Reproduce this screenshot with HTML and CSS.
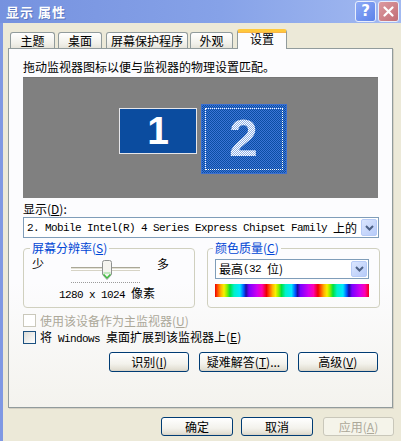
FILE: index.html
```html
<!DOCTYPE html>
<html lang="zh-CN">
<head>
<meta charset="utf-8">
<title>显示 属性</title>
<link rel="stylesheet" href="styles.css">
</head>
<body>
<div class="win">
  <div class="titlebar">
    <span class="title">显示 属性</span>
    <div class="tbtns">
      <span class="tb help">?</span>
      <span class="tb close"><svg width="11" height="11" viewBox="0 0 11 11"><path d="M1.5 1.5 L9.5 9.5 M9.5 1.5 L1.5 9.5" stroke="#fff" stroke-width="2.2" stroke-linecap="round"/></svg></span>
    </div>
  </div>
  <div class="frame">
    <div class="tabs">
      <div class="tab t1">主题</div>
      <div class="tab t2">桌面</div>
      <div class="tab t3">屏幕保护程序</div>
      <div class="tab t4">外观</div>
      <div class="tab sel">设置</div>
    </div>
    <div class="panel">
      <p class="hint">拖动监视器图标以便与监视器的物理设置匹配。</p>
      <div class="canvas">
        <div class="mon m1">1</div>
        <div class="mon m2"><div class="focus"><span class="num2">2</span></div></div>
      </div>
      <div class="lbl">显示(<u>D</u>):</div>
      <div class="combo wide">
        <span class="val"><span class="en">2. Mobile Intel(R) 4 Series Express Chipset Family </span>上的</span>
        <span class="drop"><svg width="9" height="6" viewBox="0 0 9 6"><path d="M1 1 L4.5 4.5 L8 1" stroke="#4d6185" stroke-width="2" fill="none"/></svg></span>
      </div>
      <div class="groups">
        <fieldset class="grp res">
          <legend>屏幕分辨率(<u>S</u>)</legend>
          <div class="srow">
            <span class="lo">少</span>
            <div class="slider">
              <div class="track"></div>
              <div class="ticks"></div>
              <svg class="thumb" width="12" height="21" viewBox="0 0 12 21">
                <path d="M1.5 2.5 Q1.5 0.5 3.5 0.5 H8.5 Q10.5 0.5 10.5 2.5 V14.5 L6 19.5 L1.5 14.5 Z" fill="#f5f4ef" stroke="#8e9190"/>
                <path d="M2.5 14.2 L6 18 L9.5 14.2" fill="none" stroke="#3fbf3f" stroke-width="1.3"/>
                <path d="M2.5 13 H9.5" stroke="#8fdc8f"/>
              </svg>
            </div>
            <span class="hi">多</span>
          </div>
          <div class="cap"><span class="en">1280 x 1024 </span>像素</div>
        </fieldset>
        <fieldset class="grp col">
          <legend>颜色质量(<u>C</u>)</legend>
          <div class="combo small">
            <span class="val">最高<span class="en">(32 </span>位)</span>
            <span class="drop"><svg width="9" height="6" viewBox="0 0 9 6"><path d="M1 1 L4.5 4.5 L8 1" stroke="#4d6185" stroke-width="2" fill="none"/></svg></span>
          </div>
          <div class="colorbar"></div>
        </fieldset>
      </div>
      <div class="chk dis"><span class="box"></span><span>使用该设备作为主监视器(<u>U</u>)</span></div>
      <div class="chk"><span class="box"></span><span>将<span class="en"> Windows </span>桌面扩展到该监视器上(<u>E</u>)</span></div>
      <div class="btnrow">
        <button class="btn w82">识别(<u>I</u>)</button>
        <button class="btn w90">疑难解答(<u>T</u>)...</button>
        <button class="btn w82">高级(<u>V</u>)</button>
      </div>
    </div>
    <div class="footer">
      <button class="btn ok">确定</button>
      <button class="btn cancel">取消</button>
      <button class="btn apply" disabled>应用(<u>A</u>)</button>
    </div>
  </div>
</div>
</body>
</html>
```

FILE: styles.css
```css
* { box-sizing: border-box; margin: 0; padding: 0; }
html, body { width: 401px; height: 441px; overflow: hidden; }
body {
  background: #ece9d8;
  font: 12px/14px "Noto Sans CJK SC", sans-serif;
  color: #000;
}
.en { font-family: "Liberation Mono", monospace; font-size: 11px; letter-spacing: -0.6px; white-space: pre; }
u { text-decoration: underline; text-underline-offset: 1px; }

.win { display: flex; flex-direction: column; height: 441px; }

.titlebar {
  height: 23px;
  display: flex;
  align-items: center;
  justify-content: space-between;
  padding: 0 2px 0 6px;
  background: linear-gradient(90deg, #7692df 0%, #86a2e8 55%, #a3baf1 100%);
}
.title {
  color: #fff;
  font-weight: bold;
  font-size: 13px;
  letter-spacing: 1px;
  text-shadow: 1px 1px 0 #5d77c0;
}
.tbtns { display: flex; gap: 2px; }
.tb {
  width: 21px; height: 21px;
  border: 1px solid #e8eefc;
  border-radius: 3px;
  display: flex; align-items: center; justify-content: center;
}
.help {
  background: linear-gradient(135deg, #8eabf6, #5c82ea);
  color: #fff;
  font: bold 15px/1 "DejaVu Sans", sans-serif;
}
.close { background: linear-gradient(135deg, #dc9aa0, #c26d75); }

.frame {
  flex: 1;
  display: flex;
  flex-direction: column;
  border-left: 3px solid #7f98e3;
  padding: 6px 8px 0 5px;
}

.tabs {
  display: flex;
  align-items: flex-end;
  height: 20px;
  padding-left: 2px;
  margin-bottom: -1px;
  position: relative;
  z-index: 1;
}
.tab {
  height: 16px;
  margin-bottom: 1px;
  border: 1px solid #919b9c;
  border-bottom: none;
  border-radius: 3px 3px 0 0;
  background: linear-gradient(#ffffff, #f1f0ea 70%, #e6e4da);
  text-align: center;
  padding-top: 1px;
  line-height: 14px;
}
.t1 { width: 45px; margin-right: 3px; }
.t2 { width: 44px; margin-right: 4px; }
.t3 { width: 82px; margin-right: 2px; }
.t4 { width: 43px; margin-right: 4px; }
.sel {
  width: 50px;
  height: 20px;
  margin-bottom: 0;
  border-top: 3px solid #ffc83c;
  box-shadow: inset 0 1px 0 #f7b44a;
  background: #fcfcfe;
  padding-top: 0;
}

.panel {
  height: 360px;
  border: 1px solid #919b9c;
  background: linear-gradient(#fcfcfe 0%, #fcfcfe 65%, #f4f3ee 100%);
  box-shadow: 1px 1px 0 #d4d0c3;
  padding: 11px 14px 0 14px;
  display: flex;
  flex-direction: column;
}
.hint { line-height: 14px; }

.canvas {
  margin-top: 3px;
  height: 121px;
  background: #808080;
  border-top: 1px solid #767676;
  position: relative;
}
.mon {
  position: absolute;
  display: flex; align-items: center; justify-content: center;
  font-family: "Liberation Sans", Arial, sans-serif;
  font-weight: bold;
  color: #fff;
}
.m1 {
  left: 96px; top: 30px;
  width: 78px; height: 46px;
  border: 1px solid #e6e6ea;
  background: #0b4c9f;
  font-size: 39px;
  line-height: 1;
  padding-bottom: 1px;
}
.m2 {
  left: 178px; top: 26px;
  width: 86px; height: 70px;
  border: 1px solid #3a6fd0;
  background: repeating-conic-gradient(#0c4ea2 0 25%, #3b74d6 0 50%) 0 0 / 2px 2px;
  padding: 3px;
}
.focus {
  width: 100%; height: 100%;
  border: 1px dotted #fff;
  display: flex; align-items: center; justify-content: center;
}
.num2 {
  font-size: 52px;
  line-height: 1;
  background: repeating-conic-gradient(#ffffff 0 25%, #8fb0e6 0 50%) 0 0 / 2px 2px;
  -webkit-background-clip: text;
  background-clip: text;
  color: transparent;
  margin-top: -3px;
  margin-left: -1px;
}

.lbl { margin-top: 4px; line-height: 14px; }

.combo {
  display: flex;
  align-items: stretch;
  border: 1px solid #7f9db9;
  background: #fff;
}
.combo .val { flex: 1; padding-left: 3px; display: flex; align-items: center; white-space: nowrap; overflow: hidden; }
.combo .drop {
  width: 16px;
  margin: 1px;
  border: 1px solid #b7cbf7;
  border-radius: 2px;
  background: linear-gradient(135deg, #dbe6fe, #b7cbf9);
  display: flex; align-items: center; justify-content: center;
}
.wide { margin-top: 1px; height: 21px; margin-right: -1px; }
.small { margin-top: 4px; height: 20px; }

.groups {
  display: flex;
  gap: 12px;
  margin-top: 3px;
  margin-right: -2px;
}
.grp {
  border: 1px solid #d0d0bf;
  border-radius: 4px;
  min-width: 0;
}
.grp legend {
  color: #0046d5;
  padding: 0 2px;
  margin-left: -2px;
  line-height: 14px;
}
.res { width: 172px; padding: 0 8px 5px 8px; }
.col { width: 173px; padding: 0 10px 8px 7px; }

.srow { display: flex; margin-top: 2px; }
.lo { width: 39px; }
.hi { margin-left: 17px; }
.slider { width: 69px; height: 26px; position: relative; }
.track {
  margin-top: 10px;
  height: 3px;
  border-top: 1px solid #a9a797;
  border-bottom: 1px solid #ffffff;
  background: #e4e2d6;
  box-shadow: 0 1px 0 #d6d3c5;
}
.ticks {
  margin-top: 12px;
  border-top: 1px dotted #9a9a9a;
}
.thumb { position: absolute; left: 30px; top: 3px; }
.cap { margin-top: 3px; text-align: center; padding-right: 4px; }

.colorbar {
  margin-top: 5px;
  height: 13px;
  background: repeating-linear-gradient(90deg,
    #f00000 0px, #ff5a00 3px, #ffb400 6px, #f8f000 9px, #8cf000 12px, #00e040 15px,
    #00f0c8 19px, #00e8ff 25px, #0050ff 29px, #1a10a0 31px, #7800ff 34px,
    #d000f0 42px, #ff00b0 47px, #f00000 51.5px);
}

.chk { display: flex; align-items: center; gap: 4px; height: 17px; }
.panel .chk.dis { margin-top: 4px; color: #aca899; }
.box {
  width: 13px; height: 13px;
  border: 1px solid #1c5180;
  background: linear-gradient(135deg, #dcdcd7, #ffffff);
}
.dis .box { border-color: #cac8bb; background: #fff; }

.btnrow { display: flex; gap: 10px; margin-top: 6px; padding-left: 86px; }
.btn {
  height: 20px;
  border: 1px solid #003c74;
  border-radius: 3px;
  background: linear-gradient(#ffffff, #f3f2ec 60%, #e3e0d4 90%, #d6d0c5);
  font: 12px/14px "Noto Sans CJK SC", sans-serif;
  color: #000;
  display: flex; align-items: center; justify-content: center;
}
.w82 { width: 82px; }
.w90 { width: 90px; }

.footer { display: flex; justify-content: flex-end; margin-top: 9px; margin-right: -1px; }
.footer .btn { height: 19px; }
.ok { width: 72px; margin-right: 8px; }
.cancel { width: 72px; margin-right: 10px; }
.apply {
  width: 71px;
  border-color: #c9c7ba;
  background: #f5f4ea;
  color: #aca899;
}
```
